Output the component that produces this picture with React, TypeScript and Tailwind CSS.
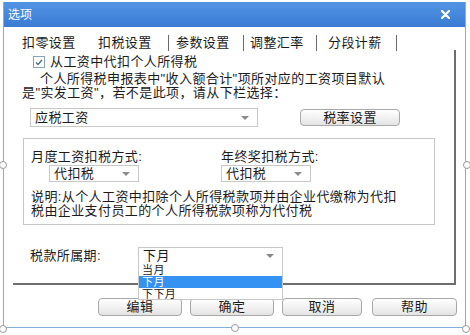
import React from "react";

function Caret() {
  return <div className="w-0 h-0 border-l-[4px] border-r-[4px] border-t-[4px] border-l-transparent border-r-transparent border-t-[#8a8a8a]" />;
}

interface SelectProps {
  readonly value: string;
  readonly className: string;
  readonly children?: React.ReactNode;
}

function Select({ value, className, children }: SelectProps) {
  return (
    <div className={`relative flex items-center justify-between border border-[#c8c8c8] bg-white pl-[4px] pr-[8px] ${className}`}>
      <span>{value}</span>
      <Caret />
      {children}
    </div>
  );
}

function Btn({ label, className }: { readonly label: string; readonly className: string }) {
  return (
    <div className={`flex items-center justify-center rounded-[4px] border border-[#a8a8a8] bg-gradient-to-b from-white to-[#e4e4e4] ${className}`}>
      {label}
    </div>
  );
}

function Sep() {
  return <div className="w-px h-[16px] bg-[#6a6a6a]" />;
}

function Handle({ className }: { readonly className: string }) {
  return <div className={`absolute w-[8px] h-[8px] rounded-full border border-[#9a9a9a] bg-white ${className}`} />;
}

export default function App() {
  return (
    <div className="relative w-[470px] h-[335px] bg-white overflow-hidden pt-[2px] pl-[3px] text-[13px] tracking-[0.4px] text-[#1b1b1b] font-['Liberation_Sans','Noto_Sans_CJK_SC',sans-serif]">
      <div className="w-[463px] h-[326px] flex flex-col border-x border-b border-[#86ade2] rounded-b-[3px] bg-white">
        {/* title bar */}
        <div className="h-[25px] shrink-0 flex items-center justify-between pl-[4px] pr-[15px] bg-gradient-to-b from-[#5294e4] to-[#3a7bd4] text-white text-[12px] tracking-normal">
          <span>选项</span>
          <svg width="9" height="9" viewBox="0 0 9 9">
            <path d="M1 1 L8 8 M8 1 L1 8" stroke="white" strokeWidth="2.2" strokeLinecap="round" />
          </svg>
        </div>

        {/* tabs */}
        <div className="mt-[9px] h-[14px] flex items-center leading-[14px]">
          <span className="ml-[18px] w-[76px]">扣零设置</span>
          <span className="w-[70px]">扣税设置</span>
          <div className="w-[8px]"><Sep /></div>
          <span className="w-[67px]">参数设置</span>
          <div className="w-[7px]"><Sep /></div>
          <span className="w-[66px]">调整汇率</span>
          <div className="w-[12px]"><Sep /></div>
          <span className="w-[68px]">分段计薪</span>
          <Sep />
        </div>

        {/* tab page */}
        <div className="ml-[9px] w-[443px] h-[235px] shrink-0 border-r-2 border-b-2 border-[#6e6e6e]">
          <div className="mt-[5px] pl-[20px] flex items-center gap-[5px] h-[14px]">
            <div className="w-[12px] h-[12px] border border-[#8aa3bd] bg-white flex items-center justify-center">
              <svg width="8" height="7" viewBox="0 0 8 7">
                <path d="M1 3.5 L3 5.5 L7 1" stroke="#4a6f96" strokeWidth="1.4" fill="none" />
              </svg>
            </div>
            <span className="leading-[14px]">从工资中代扣个人所得税</span>
          </div>

          <div className="mt-[3px] pl-[9px] leading-[14px]">
            <div className="pl-[18px]">个人所得税申报表中"收入额合计"项所对应的工资项目默认</div>
            <div>是"实发工资"，若不是此项，请从下栏选择：</div>
          </div>

          <div className="mt-[8px] flex items-start">
            <Select value="应税工资" className="ml-[17px] w-[228px] h-[19px]" />
            <Btn label="税率设置" className="ml-[42px] mt-[1px] w-[100px] h-[17px]" />
          </div>

          <div className="mt-[11px] ml-[10px] w-[412px] h-[87px] border border-[#c6c6c6] pt-[11px] pl-[7px]">
            <div className="flex leading-[14px]">
              <div className="w-[190px]">
                <div>月度工资扣税方式:</div>
                <Select value="代扣税" className="mt-[1px] ml-[18px] w-[90px] h-[17px]" />
              </div>
              <div>
                <div>年终奖扣税方式:</div>
                <Select value="代扣税" className="mt-[1px] w-[90px] h-[17px]" />
              </div>
            </div>
            <div className="mt-[8px] leading-[14px]">
              <div>说明:从个人工资中扣除个人所得税款项并由企业代缴称为代扣</div>
              <div>税由企业支付员工的个人所得税款项称为代付税</div>
            </div>
          </div>

          <div className="mt-[21px] flex items-center">
            <span className="ml-[17px] w-[108px]">税款所属期:</span>
            <Select value="下月" className="w-[145px] h-[18px]">
              <div className="absolute left-[-1px] top-full w-[145px] h-[36px] z-10 bg-white border border-t-0 border-[#c8c8c8] text-[11px] leading-[12px]">
                <div className="pl-[3px] h-[12px]">当月</div>
                <div className="pl-[3px] h-[12px] bg-[#3392f2] text-white">下月</div>
                <div className="pl-[3px] h-[12px]">下下月</div>
              </div>
            </Select>
          </div>
        </div>

        {/* buttons */}
        <div className="mt-[13px] ml-[94px] flex">
          <Btn label="编辑" className="w-[84px] h-[18px]" />
          <Btn label="确定" className="ml-[8px] w-[84px] h-[18px]" />
          <Btn label="取消" className="ml-[8px] w-[80px] h-[18px]" />
          <Btn label="帮助" className="ml-[10px] w-[85px] h-[18px]" />
        </div>
      </div>

      <Handle className="left-[-1px] top-[161px]" />
      <Handle className="left-[463px] top-[161px]" />
      <Handle className="left-[231px] top-[324px]" />
      <Handle className="left-[-1px] top-[325px]" />
      <Handle className="left-[462px] top-[325px]" />
    </div>
  );
}
